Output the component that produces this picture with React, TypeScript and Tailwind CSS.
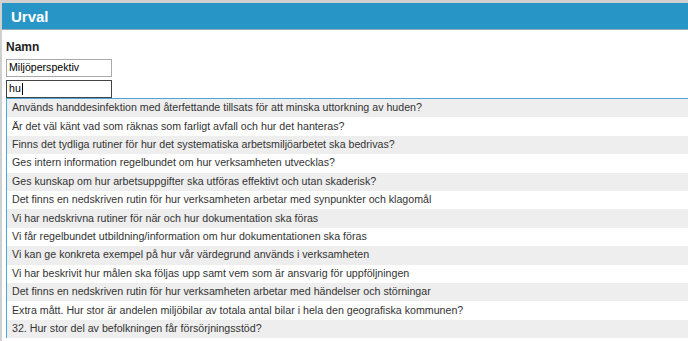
import React from "react";

const items = [
  "Används handdesinfektion med återfettande tillsats för att minska uttorkning av huden?",
  "Är det väl känt vad som räknas som farligt avfall och hur det hanteras?",
  "Finns det tydliga rutiner för hur det systematiska arbetsmiljöarbetet ska bedrivas?",
  "Ges intern information regelbundet om hur verksamheten utvecklas?",
  "Ges kunskap om hur arbetsuppgifter ska utföras effektivt och utan skaderisk?",
  "Det finns en nedskriven rutin för hur verksamheten arbetar med synpunkter och klagomål",
  "Vi har nedskrivna rutiner för när och hur dokumentation ska föras",
  "Vi får regelbundet utbildning/information om hur dokumentationen ska föras",
  "Vi kan ge konkreta exempel på hur vår värdegrund används i verksamheten",
  "Vi har beskrivit hur målen ska följas upp samt vem som är ansvarig för uppföljningen",
  "Det finns en nedskriven rutin för hur verksamheten arbetar med händelser och störningar",
  "Extra mått. Hur stor är andelen miljöbilar av totala antal bilar i hela den geografiska kommunen?",
  "32. Hur stor del av befolkningen får försörjningsstöd?",
];

export default function App() {
  return (
    <div
      className="w-[688px] h-[341px] overflow-hidden bg-[#d0d0d0] pt-[3px] pl-[2px]"
      style={{ fontFamily: '"Liberation Sans", Arial, sans-serif' }}
    >
      <div className="bg-white h-full flex flex-col">
        <div className="shrink-0 h-[27px] bg-[#2795c6] border-b border-[#8fa9b8] flex items-center pl-[9px]">
          <span className="text-white font-bold text-[15px] leading-none">Urval</span>
        </div>
        <div className="shrink-0 pl-[4px] pt-[10px] flex flex-col">
          <div className="text-[12px] font-bold text-[#222] leading-[14px] h-[16px]">Namn</div>
          <div className="h-[3px] shrink-0" />
          <div className="shrink-0 w-[106px] h-[18px] border border-[#a9a9a9] flex items-center pl-[2px] text-[10.6px] text-black">
            Miljöperspektiv
          </div>
          <div className="shrink-0 mt-[3px] w-[106px] h-[18px] border border-[#444] flex items-center pl-[2px] text-[10.6px] text-black">
            hu<span className="inline-block w-px h-[12px] bg-black ml-[1px]" />
          </div>
          <div className="shrink-0 border-t border-l border-[#4aa7d6] flex flex-col">
            {items.map((t, i) => (
              <div
                key={i}
                className={`shrink-0 h-[18.4px] flex items-center pl-[5px] text-[10.65px] text-[#333] whitespace-nowrap ${
                  i % 2 === 0 ? "bg-[#eeeeee]" : "bg-white"
                }`}
              >
                {t}
              </div>
            ))}
          </div>
        </div>
      </div>
    </div>
  );
}
